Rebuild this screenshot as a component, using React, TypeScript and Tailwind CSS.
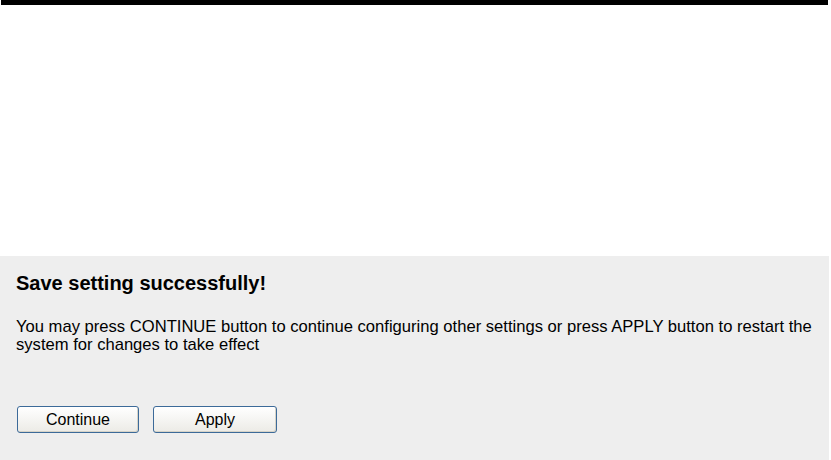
export default function App() {
	return (
		<div className="h-[460px] w-[831px] overflow-hidden bg-white font-['Liberation_Sans',Arial,sans-serif] text-black">
			<div className="ml-px h-[5px] w-[827px] bg-black" />
			<div className="mt-[251px] h-[204px] w-[829px] bg-[#eeeeee] px-4 pt-4">
				<h1 className="text-[20px] font-bold leading-[23px]">Save setting successfully!</h1>
				<p className="mt-[23px] text-[16.6px] leading-[18px]">
					You may press CONTINUE button to continue configuring other settings or press APPLY button to restart the
					system for changes to take effect
				</p>
				<div className="mt-[52px] flex gap-[14px] pl-px">
					<button
						type="button"
						className="h-[27px] w-[122px] rounded-[3px] border border-[#3c6a99] bg-gradient-to-b from-white to-[#ecebe6] text-[16px] leading-none shadow-[inset_-1px_-1px_0_#d6d3c8]"
					>
						Continue
					</button>
					<button
						type="button"
						className="h-[27px] w-[124px] rounded-[3px] border border-[#3c6a99] bg-gradient-to-b from-white to-[#ecebe6] text-[16px] leading-none shadow-[inset_-1px_-1px_0_#d6d3c8]"
					>
						Apply
					</button>
				</div>
			</div>
		</div>
	);
}
